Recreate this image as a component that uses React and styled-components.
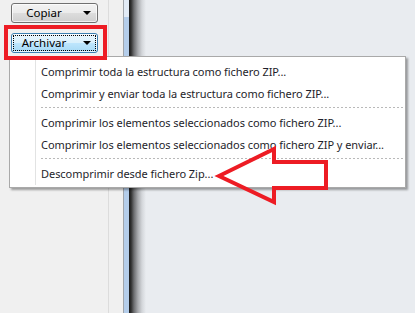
import React from "react";
import styled, { createGlobalStyle } from "styled-components";

const Global = createGlobalStyle`
  html, body { margin: 0; padding: 0; background: #e9ecf0; }
  body { width: 415px; height: 313px; overflow: hidden; }
  * { box-sizing: border-box; }
`;

const Screen = styled.div`
  position: relative;
  display: flex;
  width: 415px;
  height: 313px;
  overflow: hidden;
  font-family: "Noto Sans", "Liberation Sans", sans-serif;
`;

const Sidebar = styled.div`
  width: 109px;
  flex: none;
  display: flex;
  flex-direction: column;
  gap: 10px;
  padding: 3px 0 0 11px;
  background: #f0f0f0;
  border-right: 1px solid #dcdcdc;
`;

const Gap = styled.div`
  width: 14px;
  flex: none;
  background: #f0f0f0;
`;

const ScrollTrack = styled.div`
  width: 6px;
  flex: none;
  border-left: 1px solid #9fa4aa;
  background: linear-gradient(to bottom, #e2ebf6 0 17px, #b4cdea 17px);
`;

const ShadowEdge = styled.div`
  width: 17px;
  flex: none;
  background: linear-gradient(
    to right,
    #1c1c1c 0,
    #2f2f2f 2px,
    #6e6f72 5px,
    #a9abaf 9px,
    #d3d6da 13px,
    #e9ecf0 17px
  );
`;

const Content = styled.div`
  flex: 1;
  background: #e9ecf0;
`;

const Button = styled.div`
  width: 87px;
  height: 20px;
  display: flex;
  align-items: center;
  padding-right: 6px;
  border: 1px solid ${(p) => (p.$active ? "#3c7fb1" : "#707070")};
  border-radius: 3px;
  background: ${(p) =>
    p.$active
      ? "linear-gradient(to bottom, #eaf6fd 0%, #d9f0fc 50%, #bee6fd 50%, #a7d9f5 100%)"
      : "linear-gradient(to bottom, #f2f2f2 0%, #ebebeb 50%, #dddddd 50%, #cfcfcf 100%)"};
  box-shadow: inset 0 0 0 1px rgba(255, 255, 255, 0.7);
  outline: ${(p) => (p.$active ? "1px dotted #000" : "none")};
  outline-offset: -3px;
  font-size: 11.5px;
  color: #000;
`;

const Label = styled.span`
  flex: 1;
  text-align: center;
  margin-right: 7px;
  line-height: 1;
`;

const Caret = styled.span`
  width: 0;
  height: 0;
  border-left: 4px solid transparent;
  border-right: 4px solid transparent;
  border-top: 4px solid #000;
`;

const Highlight = styled.div`
  position: absolute;
  left: 4px;
  top: 25px;
  width: 103px;
  height: 35px;
  border: 4px solid #ed1c24;
  pointer-events: none;
`;

const Menu = styled.div`
  position: absolute;
  left: 9px;
  top: 56px;
  width: 397px;
  padding: 3px 2px;
  background: #fff;
  border: 1px solid #a9a9a9;
  box-shadow: 2px 2px 2px rgba(0, 0, 0, 0.35);
  display: flex;
  flex-direction: column;
  &::before {
    content: "";
    position: absolute;
    left: 25px;
    top: 2px;
    bottom: 2px;
    width: 1px;
    background: #e2e3e3;
    box-shadow: 1px 0 0 #fff;
  }
`;

const Item = styled.div`
  height: 22px;
  display: flex;
  align-items: center;
  padding-left: 29px;
  font-size: 11px;
  letter-spacing: -0.05px;
  color: #1e1e2a;
  white-space: nowrap;
`;

const Separator = styled.div`
  height: 7px;
  display: flex;
  align-items: center;
  padding-left: 29px;
  &::after {
    content: "";
    flex: 1;
    height: 1px;
    background: repeating-linear-gradient(
      to right,
      #b9b9b9 0 2px,
      transparent 2px 4px
    );
  }
`;

const ArrowLayer = styled.svg`
  position: absolute;
  left: 0;
  top: 0;
  width: 415px;
  height: 313px;
  pointer-events: none;
`;

const items = [
  "Comprimir toda la estructura como fichero ZIP...",
  "Comprimir y enviar toda la estructura como fichero ZIP...",
  null,
  "Comprimir los elementos seleccionados como fichero ZIP...",
  "Comprimir los elementos seleccionados como fichero ZIP y enviar...",
  null,
  "Descomprimir desde fichero Zip...",
];

export default function App() {
  return (
    <>
      <Global />
      <Screen>
        <Sidebar>
          <Button>
            <Label>Copiar</Label>
            <Caret />
          </Button>
          <Button $active>
            <Label>Archivar</Label>
            <Caret />
          </Button>
        </Sidebar>
        <Gap />
        <ScrollTrack />
        <ShadowEdge />
        <Content />
        <Menu>
          {items.map((it, i) =>
            it ? <Item key={i}>{it}</Item> : <Separator key={i} />
          )}
        </Menu>
        <Highlight />
        <ArrowLayer viewBox="0 0 415 313">
          <polygon
            points="219,176 274,149 274,162 326,162 326,188 274,188 274,202"
            fill="none"
            stroke="#ed1c24"
            strokeWidth="4"
            strokeLinejoin="miter"
          />
        </ArrowLayer>
      </Screen>
    </>
  );
}
